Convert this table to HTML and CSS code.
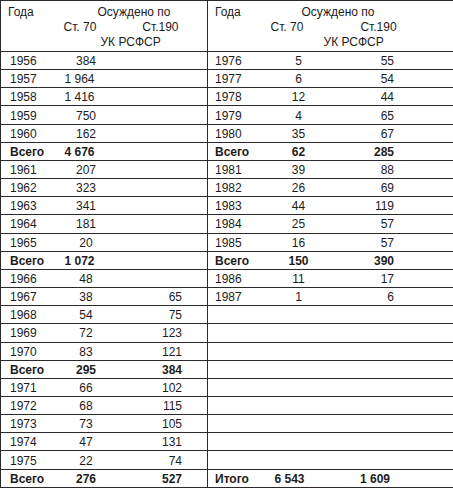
FILE: index.html
```html
<!DOCTYPE html>
<html lang="ru">
<head>
<meta charset="utf-8">
<link rel="stylesheet" href="styles.css">
</head>
<body>
<table class="stats">
  <colgroup>
    <col class="c-year-l"><col class="c-a-l"><col class="c-b-l">
    <col class="c-year-r"><col class="c-a-r"><col class="c-b-r">
  </colgroup>
  <thead>
    <tr class="head">
      <td class="h-year">Года</td>
      <td class="h-group h-left" colspan="2">
        <div class="h-line1">Осуждено по</div>
        <div class="h-line2"><span class="h-st70">Ст. 70</span><span class="h-st190">Ст.190</span></div>
        <div class="h-line3">УК РСФСР</div>
      </td>
      <td class="h-year split">Года</td>
      <td class="h-group h-right" colspan="2">
        <div class="h-line1">Осуждено по</div>
        <div class="h-line2"><span class="h-st70">Ст. 70</span><span class="h-st190">Ст.190</span></div>
        <div class="h-line3">УК РСФСР</div>
      </td>
    </tr>
  </thead>
  <tbody>
    <tr><td class="y">1956</td><td class="a">384</td><td class="b"></td><td class="y split">1976</td><td class="ar">5</td><td class="br">55</td></tr>
    <tr><td class="y">1957</td><td class="a wide">1&nbsp;964</td><td class="b"></td><td class="y split">1977</td><td class="ar">6</td><td class="br">54</td></tr>
    <tr><td class="y">1958</td><td class="a wide">1&nbsp;416</td><td class="b"></td><td class="y split">1978</td><td class="ar">12</td><td class="br">44</td></tr>
    <tr><td class="y">1959</td><td class="a">750</td><td class="b"></td><td class="y split">1979</td><td class="ar">4</td><td class="br">65</td></tr>
    <tr><td class="y">1960</td><td class="a">162</td><td class="b"></td><td class="y split">1980</td><td class="ar">35</td><td class="br">67</td></tr>
    <tr class="total"><td class="y">Всего</td><td class="a wide">4&nbsp;676</td><td class="b"></td><td class="y split">Всего</td><td class="ar">62</td><td class="br">285</td></tr>
    <tr><td class="y">1961</td><td class="a">207</td><td class="b"></td><td class="y split">1981</td><td class="ar">39</td><td class="br">88</td></tr>
    <tr><td class="y">1962</td><td class="a">323</td><td class="b"></td><td class="y split">1982</td><td class="ar">26</td><td class="br">69</td></tr>
    <tr><td class="y">1963</td><td class="a">341</td><td class="b"></td><td class="y split">1983</td><td class="ar">44</td><td class="br">119</td></tr>
    <tr><td class="y">1964</td><td class="a">181</td><td class="b"></td><td class="y split">1984</td><td class="ar">25</td><td class="br">57</td></tr>
    <tr><td class="y">1965</td><td class="a">20</td><td class="b"></td><td class="y split">1985</td><td class="ar">16</td><td class="br">57</td></tr>
    <tr class="total"><td class="y">Всего</td><td class="a wide">1&nbsp;072</td><td class="b"></td><td class="y split">Всего</td><td class="ar">150</td><td class="br">390</td></tr>
    <tr><td class="y">1966</td><td class="a">48</td><td class="b"></td><td class="y split">1986</td><td class="ar">11</td><td class="br">17</td></tr>
    <tr><td class="y">1967</td><td class="a">38</td><td class="b">65</td><td class="y split">1987</td><td class="ar">1</td><td class="br">6</td></tr>
    <tr><td class="y">1968</td><td class="a">54</td><td class="b">75</td><td class="y split"></td><td class="ar"></td><td class="br"></td></tr>
    <tr><td class="y">1969</td><td class="a">72</td><td class="b">123</td><td class="y split"></td><td class="ar"></td><td class="br"></td></tr>
    <tr><td class="y">1970</td><td class="a">83</td><td class="b">121</td><td class="y split"></td><td class="ar"></td><td class="br"></td></tr>
    <tr class="total"><td class="y">Всего</td><td class="a">295</td><td class="b">384</td><td class="y split"></td><td class="ar"></td><td class="br"></td></tr>
    <tr><td class="y">1971</td><td class="a">66</td><td class="b">102</td><td class="y split"></td><td class="ar"></td><td class="br"></td></tr>
    <tr><td class="y">1972</td><td class="a">68</td><td class="b">115</td><td class="y split"></td><td class="ar"></td><td class="br"></td></tr>
    <tr><td class="y">1973</td><td class="a">73</td><td class="b">105</td><td class="y split"></td><td class="ar"></td><td class="br"></td></tr>
    <tr><td class="y">1974</td><td class="a">47</td><td class="b">131</td><td class="y split"></td><td class="ar"></td><td class="br"></td></tr>
    <tr><td class="y">1975</td><td class="a">22</td><td class="b">74</td><td class="y split"></td><td class="ar"></td><td class="br"></td></tr>
    <tr class="total"><td class="y">Всего</td><td class="a">276</td><td class="b">527</td><td class="y split">Итого</td><td class="ar grand">6&nbsp;543</td><td class="br grand">1&nbsp;609</td></tr>
  </tbody>
</table>
</body>
</html>
```

FILE: styles.css
```css
html, body {
  margin: 0;
  padding: 0;
  background: #ffffff;
}

body {
  font-family: "Liberation Sans", Arial, sans-serif;
  font-size: 12px;
  color: #1c1c1c;
}

.stats {
  border-collapse: collapse;
  table-layout: fixed;
  width: 453px;
  border: 1px solid #2a2a2a;
}

.c-year-l { width: 50px; }
.c-a-l { width: 50px; }
.c-b-l { width: 107px; }
.c-year-r { width: 58px; }
.c-a-r { width: 68px; }
.c-b-r { width: 120px; }

.stats td {
  box-sizing: border-box;
  padding: 1px 0 0 0;
  border-top: 1px solid #2a2a2a;
  height: 18.17px;
  line-height: 14px;
  white-space: nowrap;
  vertical-align: middle;
}

.stats td.split {
  border-left: 1px solid #2a2a2a;
}

.head td {
  height: 51px;
  vertical-align: top;
  padding-top: 4px;
  line-height: 15px;
}

.h-year {
  padding-left: 7px !important;
}

.h-line2 {
  display: flex;
}

.h-left .h-line1 { padding-left: 47px; }
.h-left .h-st70 { margin-left: 13px; }
.h-left .h-st190 { margin-left: 46px; }
.h-left .h-line3 { padding-left: 50px; }

.h-right .h-line1 { padding-left: 36px; }
.h-right .h-st70 { margin-left: 5px; }
.h-right .h-st190 { margin-left: 57px; }
.h-right .h-line3 { padding-left: 58px; }

.y {
  padding-left: 9px !important;
}

.y.split {
  padding-left: 7px !important;
}

.a {
  text-align: center;
  padding-left: 21px !important;
}

.a.wide {
  text-align: left;
  padding-left: 14px !important;
}

.b {
  text-align: right;
  padding-right: 25px !important;
}

.ar {
  text-align: center;
  padding-right: 2px !important;
}

.br {
  text-align: right;
  padding-right: 59px !important;
}

.total td {
  font-weight: bold;
}

.ar.grand {
  text-align: left;
  padding-left: 9px !important;
}

.br.grand {
  padding-right: 63px !important;
}
```
